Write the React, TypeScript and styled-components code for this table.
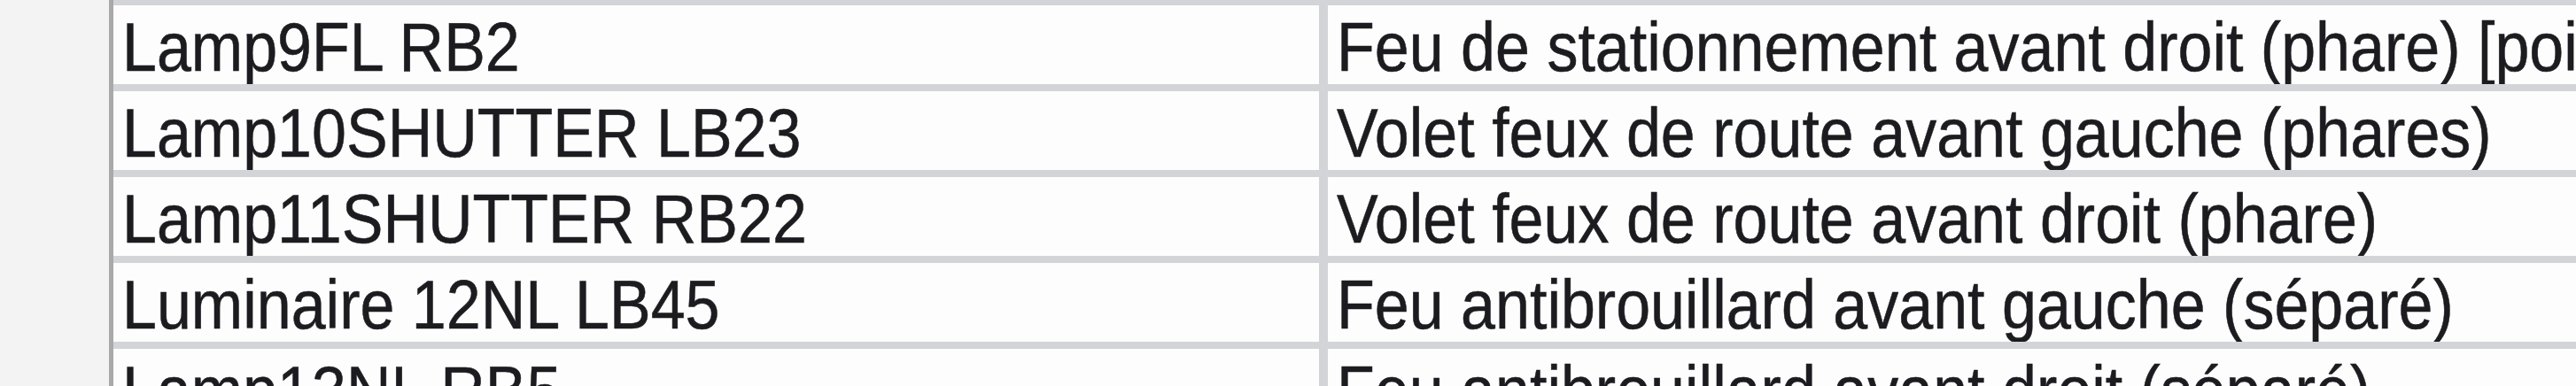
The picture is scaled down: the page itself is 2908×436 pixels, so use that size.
import React from "react";
import styled, { createGlobalStyle } from "styled-components";

const Global = createGlobalStyle`
  html, body {
    margin: 0;
    padding: 0;
    background: #f3f3f3;
    overflow: hidden;
  }
`;

const Page = styled.div`
  width: 2908px;
  height: 436px;
  display: flex;
  padding-left: 123px;
  box-sizing: border-box;
  overflow: hidden;
`;

const Table = styled.div`
  flex: 1;
  margin-top: -2px;
  display: grid;
  grid-template-columns: 1361px 1fr;
  grid-auto-rows: 89px;
  column-gap: 10px;
  row-gap: 8px;
  padding-top: 8px;
  background: #d2d4d8;
  border-left: 5px solid #a9a9aa;
  align-content: start;
`;

const Cell = styled.div`
  background: #fdfdfd;
  padding: 7px 0 0 10px;
  font-family: "Liberation Sans", Arial, sans-serif;
  font-size: 70px;
  line-height: 86px;
  color: #1c1c20;
  white-space: nowrap;
  overflow: hidden;
`;

const Label = styled.span`
  display: inline-block;
  transform: scaleY(1.1);
  transform-origin: 0 67px;
  -webkit-text-stroke: 0.5px #1c1c20;
`;

const rows: [string, string][] = [
  ["Lamp9FL RB2", "Feu de stationnement avant droit (phare) [point lumineux]"],
  ["Lamp10SHUTTER LB23", "Volet feux de route avant gauche (phares)"],
  ["Lamp11SHUTTER RB22", "Volet feux de route avant droit (phare)"],
  ["Luminaire 12NL LB45", "Feu antibrouillard avant gauche (séparé)"],
  ["Lamp13NL RB5", "Feu antibrouillard avant droit (séparé)"],
];

export default function App() {
  return (
    <>
      <Global />
      <Page>
        <Table>
          {rows.map(([a, b]) => (
            <React.Fragment key={a}>
              <Cell>
                <Label>{a}</Label>
              </Cell>
              <Cell>
                <Label>{b}</Label>
              </Cell>
            </React.Fragment>
          ))}
        </Table>
      </Page>
    </>
  );
}
